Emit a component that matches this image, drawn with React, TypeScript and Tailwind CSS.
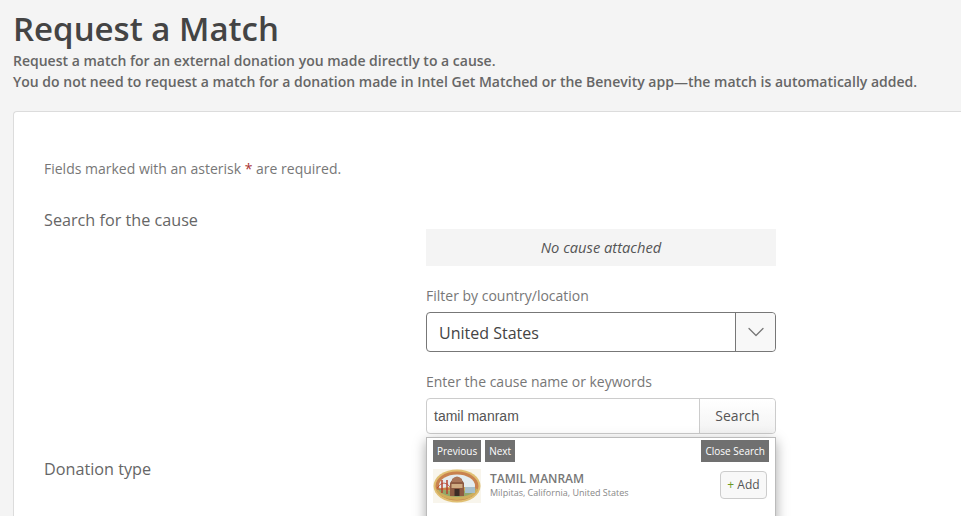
import { ChevronDown } from "lucide-react";

function CauseLogo() {
  return (
    <svg width="48" height="34" viewBox="0 0 48 34" className="shrink-0">
      <rect width="48" height="34" fill="#f8f5ec" />
      <ellipse cx="24" cy="17" rx="23.5" ry="16.5" fill="#e0bf72" />
      <ellipse cx="24" cy="17" rx="21.5" ry="14.5" fill="#c9824f" />
      <ellipse cx="24" cy="17" rx="18" ry="11.5" fill="#e4ecef" />
      <path d="M3 20 Q24 15 45 20 Q42 30 24 31 Q6 30 3 20Z" fill="#cfae5c" />
      <path d="M5 20 Q24 24 43 20 Q40 27 24 28 Q8 27 5 20Z" fill="#93a86a" />
      <path d="M9 11 V24 M14 11 V25" stroke="#b8432f" strokeWidth="1.5" />
      <path d="M4 19 Q11 9 18 19 M4 20 H18" stroke="#b8432f" strokeWidth="0.8" fill="none" />
      <path d="M17 27 V14 Q24 3 31 14 V27Z" fill="#8d5a42" />
      <path d="M19 10 Q24 5 29 10 V13 H19Z" fill="#a9765a" />
      <path d="M18.5 15 H29.5 V19 H18.5Z" fill="#d0ab82" />
      <path d="M21.5 27 V20 H26.5 V27Z" fill="#3c2c26" />
      <path d="M32 18 H42 V24 H32Z" fill="#a7bfcb" />
    </svg>
  );
}

export default function App() {
  return (
    <div className="h-[516px] w-[961px] overflow-hidden bg-[#f4f4f4] pl-[13px] font-['Open_Sans',sans-serif] text-[#666]">
      {/* Header */}
      <h1 className="pt-[9px] text-[33px] leading-[40px] font-semibold text-[#444]">Request a Match</h1>
      <p className="mt-[1px] text-[14px] leading-[21px] font-semibold text-[#666]">
        Request a match for an external donation you made directly to a cause.
        <br />
        You do not need to request a match for a donation made in Intel Get Matched or the Benevity app—the match is automatically added.
      </p>

      {/* Card */}
      <div className="mt-[19px] h-[500px] rounded-tl-[4px] border border-r-0 border-[#dcdcdc] bg-white pt-[47px] pl-[30px]">
        <p className="text-[14px] leading-[20px] text-[#777]">
          Fields marked with an asterisk <span className="text-[#a33]">*</span> are required.
        </p>

        <div className="mt-[29px] flex">
          {/* Labels */}
          <div className="w-[382px] shrink-0 text-[16.2px] leading-[22px] text-[#666]">
            <div className="mt-[1px]">Search for the cause</div>
            <div className="mt-[227px]">Donation type</div>
          </div>

          {/* Fields */}
          <div className="w-[350px]">
            <div className="mt-[21px] flex h-[37px] items-center justify-center bg-[#f4f4f4] text-[14.7px] text-[#555] italic">
              No cause attached
            </div>

            <label className="mt-[20px] block text-[14px] leading-[20px] text-[#777]">Filter by country/location</label>
            <div className="mt-[6px] flex h-[40px] rounded-[4px] border border-[#777] bg-white">
              <div className="flex flex-1 items-center pt-[2px] pl-[12px] text-[16px] text-[#444]">United States</div>
              <div className="flex w-[40px] items-center justify-center rounded-r-[4px] border-l border-[#777] bg-[#f8f8f8] text-[#777]">
                <ChevronDown size={28} strokeWidth={1.1} />
              </div>
            </div>

            <label className="mt-[20px] block text-[14px] leading-[20px] text-[#777]">Enter the cause name or keywords</label>
            <div className="mt-[6px] flex h-[36px] rounded-[4px] border border-[#ccc] bg-white">
              <div className="flex flex-1 items-center pl-[7px] font-['Liberation_Sans',sans-serif] text-[14px] text-[#555]">tamil manram</div>
              <button className="w-[76px] rounded-r-[4px] border-l border-[#ccc] bg-gradient-to-b from-white to-[#f3f3f3] pb-[2px] text-[14px] text-[#555]">
                Search
              </button>
            </div>

            {/* Search results */}
            <div className="relative">
              <div className="absolute top-[3px] left-0 h-[120px] w-[350px] border border-[#bbb] bg-white px-[6px] pt-[2px] shadow-[0_4px_12px_rgba(0,0,0,0.35)]">
                <div className="flex gap-[4px] text-[10px] leading-[22px] text-white">
                  <span className="bg-[#707070] px-[4px]">Previous</span>
                  <span className="bg-[#707070] px-[4px]">Next</span>
                  <span className="ml-auto bg-[#707070] pr-[4px] pl-[5px]">Close Search</span>
                </div>
                <div className="mt-[7px] flex items-start">
                  <CauseLogo />
                  <div className="mt-[2px] ml-[9px] flex-1">
                    <div className="text-[12px] leading-[16px] font-semibold text-[#777]">TAMIL MANRAM</div>
                    <div className="text-[9px] leading-[11px] text-[#888]">Milpitas, California, United States</div>
                  </div>
                  <button className="mt-[2px] mr-[2px] h-[28px] w-[47px] rounded-[4px] border border-[#ccc] bg-[#f8f8f8] text-[12px] text-[#555]">
                    <span className="text-[#6a9a1f]">+</span> Add
                  </button>
                </div>
              </div>
            </div>
          </div>
        </div>
      </div>
    </div>
  );
}
